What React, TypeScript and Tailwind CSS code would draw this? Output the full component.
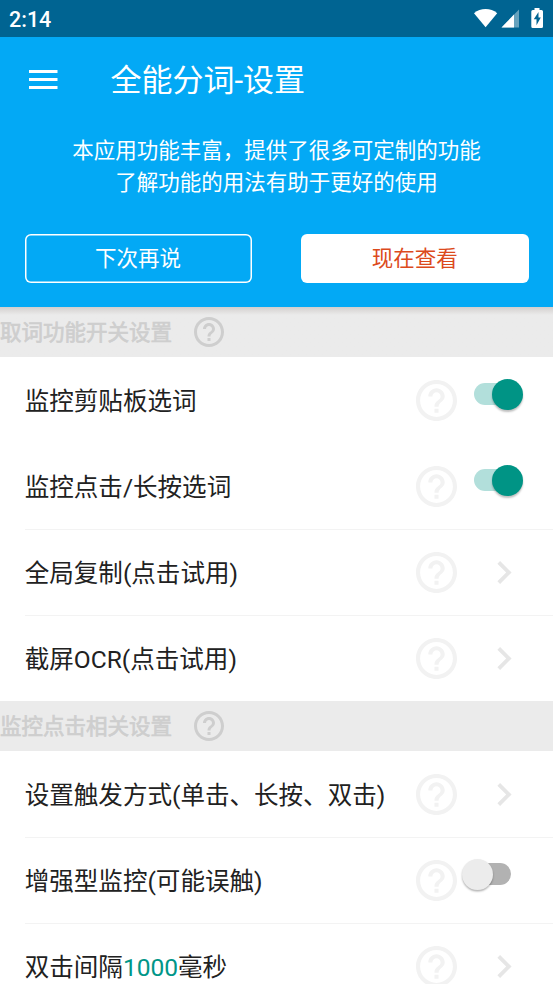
const fontStack = "font-[Roboto,'Noto_Sans_CJK_SC',sans-serif]";

function HelpIcon({ className }: { className: string }) {
  return (
    <svg viewBox="2 2 20 20" className={className} fill="currentColor" aria-hidden="true">
      <path d="M11 18h2v-2h-2v2zm1-16C6.48 2 2 6.48 2 12s4.48 10 10 10 10-4.48 10-10S17.52 2 12 2zm0 18c-4.41 0-8-3.59-8-8s3.59-8 8-8 8 3.59 8 8-3.59 8-8 8zm0-14c-2.21 0-4 1.79-4 4h2c0-1.1.9-2 2-2s2 .9 2 2c0 2-3 1.75-3 5h2c0-2.25 3-2.5 3-5 0-2.21-1.79-4-4-4z" />
    </svg>
  );
}

function Chevron() {
  return (
    <svg viewBox="8.59 6 7.41 12" className="mb-px ml-[40px] h-[23px] w-[15px] text-[#e6e6e6]" fill="currentColor" aria-hidden="true">
      <path d="M10 6 8.59 7.41 13.17 12l-4.58 4.59L10 18l6-6z" />
    </svg>
  );
}

function Toggle({ on }: { on: boolean }) {
  return on ? (
    <span role="switch" aria-checked="true" className="mb-[13px] ml-[17px] flex h-[31px] w-[49px] items-center justify-end rounded-full">
      <span className="-mr-[19px] h-[22px] w-[37px] rounded-full bg-[#b2dfdb]" />
      <span className="relative h-[31px] w-[31px] rounded-full bg-[#009485] shadow-[0_2px_2px_rgba(0,0,0,0.25)]" />
    </span>
  ) : (
    <span role="switch" aria-checked="false" className="mb-[13px] ml-[5px] flex h-[31px] w-[50px] items-center">
      <span className="relative h-[31px] w-[31px] shrink-0 rounded-full bg-[#ececec] shadow-[0_1.5px_2px_rgba(0,0,0,0.3)]" />
      <span className="-ml-[19px] h-[22px] w-[37px] shrink-0 rounded-full bg-[#b2b2b2]" />
    </span>
  );
}

type RowProps = { label: React.ReactNode; control: "on" | "off" | "arrow"; line?: boolean };

function Row({ label, control, line = true }: RowProps) {
  return (
    <div className={`ml-[25px] h-[86px] shrink-0 border-t ${line ? "border-[#f3f3f3]" : "border-transparent"}`}>
      <div className="flex h-[85px] items-center">
        <span className="-ml-[0.3px] w-[391.3px] pt-[2px] text-[24.55px] leading-9 whitespace-nowrap text-[#212121]">{label}</span>
        <HelpIcon className="h-[41px] w-[41px] text-[#f2f2f2]" />
        {control === "arrow" ? <Chevron /> : <Toggle on={control === "on"} />}
      </div>
    </div>
  );
}

function SectionHeader({ title, shadow = false }: { title: string; shadow?: boolean }) {
  return (
    <div className={`flex h-[50px] shrink-0 items-center bg-[#ebebeb] text-[#cecece] ${shadow ? "bg-linear-to-b from-[#d3cfce] to-[#ebebeb] to-[8px]" : ""}`}>
      <h2 className="w-[194px] pt-[2px] text-[21.5px] leading-8 whitespace-nowrap [-webkit-text-stroke:0.7px_#cecece]">{title}</h2>
      <HelpIcon className="h-[30px] w-[30px]" />
    </div>
  );
}

function StatusBar() {
  return (
    <div className="flex h-[37px] items-center justify-between bg-[#006492] text-white">
      <span className="pt-[3px] pl-[9px] text-[21.5px] font-medium">2:14</span>
      <svg width="79" height="37" viewBox="474 0 79 37" fill="currentColor" aria-hidden="true">
        <path d="M474 13.2C480.5 7.7 490.7 7.7 497.2 13.2L485.6 27.3Z" />
        <path d="M519 9.5V27.5H501.5Z" opacity=".4" />
        <path d="M514 14.5V27.5H501.5Z" />
        <path fillRule="evenodd" d="M534.5 8h5v2h2q1.5 0 1.5 1.5v15q0 1.5-1.5 1.5h-8.7q-1.5 0-1.5-1.5v-15q0-1.5 1.5-1.5h1.7zM538.5 12l-4.7 7.2h2.7v6l4.3-7.7h-2.3z" />
      </svg>
    </div>
  );
}

export default function App() {
  return (
    <main className={`flex h-[984px] w-[553px] flex-col overflow-hidden bg-white ${fontStack}`}>
      <header className="h-[307px] shrink-0 bg-[#03a9f5] text-white">
        <StatusBar />
        <div className="flex h-[86px] items-center">
          <svg width="29" height="19" viewBox="0 0 29 19" className="mb-[2px] ml-[28.5px]" fill="currentColor" aria-label="菜单">
            <path d="M0 0h28.5v3H0zM0 8h28.5v3H0zM0 16h28.5v3H0z" />
          </svg>
          <h1 className="ml-[53px] pt-px text-[31px] leading-10 whitespace-nowrap">全能分词-设置</h1>
        </div>
        <p className="mt-[12px] text-center text-[21.5px] leading-8">
          本应用功能丰富，提供了很多可定制的功能
          <br />
          了解功能的用法有助于更好的使用
        </p>
        <div className="mt-[35px] flex justify-between px-[24.5px]">
          <button className="h-[49px] w-[227px] rounded-[6px] pt-px text-[21.5px] leading-8 shadow-[inset_0_0_0_1.5px_white]">下次再说</button>
          <button className="h-[49px] w-[227.5px] rounded-[6px] bg-white pt-px text-[21.5px] leading-8 text-[#dc4a1c]">现在查看</button>
        </div>
      </header>
      <SectionHeader title="取词功能开关设置" shadow />
      <Row label="监控剪贴板选词" control="on" line={false} />
      <Row label="监控点击/长按选词" control="on" line={false} />
      <Row label="全局复制(点击试用)" control="arrow" />
      <Row label="截屏OCR(点击试用)" control="arrow" />
      <SectionHeader title="监控点击相关设置" />
      <Row label="设置触发方式(单击、长按、双击)" control="arrow" line={false} />
      <Row label="增强型监控(可能误触)" control="off" />
      <Row
        label={
          <>
            双击间隔<span className="text-[#009688]">1000</span>毫秒
          </>
        }
        control="arrow"
      />
    </main>
  );
}
